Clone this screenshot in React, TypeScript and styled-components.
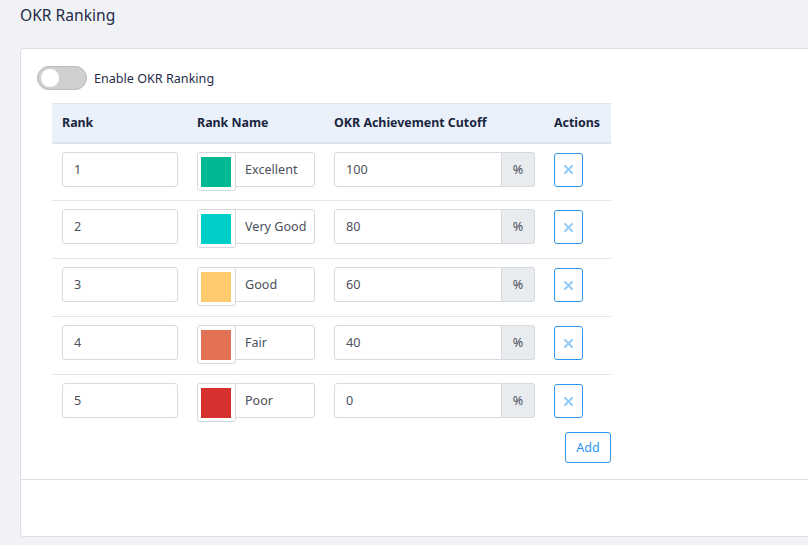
import React from "react";
import styled, { createGlobalStyle } from "styled-components";

const Global = createGlobalStyle`
  html, body { margin: 0; padding: 0; background: #f1f2f6; overflow: hidden; }
  body { font-family: "Noto Sans", "Open Sans", sans-serif; color: #1e2a4a; }
  * { box-sizing: border-box; }
`;

const Page = styled.div`
  width: 808px;
  height: 545px;
  padding: 0 0 0 20px;
  overflow: hidden;
`;

const Title = styled.h1`
  margin: 0;
  height: 48px;
  padding-top: 3px;
  font-size: 15.6px;
  font-weight: 400;
  color: #1f2b48;
  line-height: 24px;
`;

const Card = styled.div`
  width: 820px;
  height: 489px;
  background: #fff;
  border: 1px solid #dedfe3;
  border-radius: 3px;
  display: flex;
  flex-direction: column;
`;

const CardBody = styled.div`
  padding: 17px 0 0 16px;
  height: 431px;
  border-bottom: 1px solid #dedfe3;
`;

const ToggleRow = styled.label`
  display: flex;
  align-items: center;
  gap: 7px;
  font-size: 12.6px;
  color: #1f2b48;
  height: 24px;
`;

const Track = styled.span`
  width: 50px;
  height: 24px;
  border-radius: 12px;
  background: #cfcfcf;
  border: 1px solid #b9b9b9;
  display: flex;
  align-items: center;
  padding-left: 2px;
`;

const Knob = styled.span`
  width: 20px;
  height: 20px;
  border-radius: 50%;
  background: #fff;
  border: 1px solid #d4d4d4;
`;

const TableWrap = styled.div`
  margin: 13px 0 0 15px;
  width: 559px;
`;

const Table = styled.table`
  border-collapse: collapse;
  width: 100%;
`;

const Th = styled.th<{ $w: number }>`
  width: ${(p) => p.$w}px;
  text-align: left;
  font-size: 12.4px;
  font-weight: 700;
  color: #1a2540;
  background: #eaf1fb;
  border-top: 1px solid #dfe4ec;
  border-bottom: 2px solid #dfe4ec;
  height: 39px;
  padding: 0 0 0 10px;
`;

const Tr = styled.tr`
  border-bottom: 1px solid #e3e5e9;
  &:last-child { border-bottom: none; }
`;

const Td = styled.td`
  height: 58px;
  padding: 8px 0 0 10px;
  vertical-align: top;
`;

const TextInput = styled.input<{ $w: number }>`
  width: ${(p) => p.$w}px;
  height: 35px;
  border: 1px solid #d6d9de;
  border-radius: 3px;
  padding: 0 10px 0 11px;
  font-family: inherit;
  font-size: 12.6px;
  color: #4b4f5c;
  background: #fff;
  outline: none;
  display: block;
`;

const ColorGroup = styled.div`
  display: flex;
  align-items: flex-start;
`;

const Swatch = styled.div`
  width: 39px;
  height: 39px;
  border: 1px solid #d6d9de;
  border-radius: 3px;
  padding: 4px 4px 3px 3px;
  margin-right: -2px;
  background: #fff;
  position: relative;
  z-index: 1;
`;

const SwatchFill = styled.div<{ $c: string }>`
  width: 100%;
  height: 30px;
  background: ${(p) => p.$c};
`;

const NameInput = styled(TextInput)`
  border-radius: 0 3px 3px 0;
  padding-left: 10px;
  padding-right: 2px;
`;

const InputGroup = styled.div`
  display: flex;
  width: 201px;
  height: 35px;
`;

const GroupInput = styled(TextInput)`
  flex: 1;
  border-radius: 3px 0 0 3px;
`;

const Addon = styled.div`
  width: 33px;
  height: 35px;
  border: 1px solid #d6d9de;
  border-left: none;
  border-radius: 0 3px 3px 0;
  background: #e9ecef;
  display: flex;
  align-items: center;
  justify-content: center;
  font-size: 12.6px;
  color: #4b4f5c;
`;

const ActionTd = styled.td`
  padding: 8px 0 0 0;
  vertical-align: top;
`;

const DeleteBtn = styled.button`
  width: 29px;
  height: 34px;
  border: 1px solid #2d95ef;
  border-radius: 3px;
  background: #fff;
  display: flex;
  align-items: center;
  justify-content: center;
  padding: 0;
  margin-left: 10px;
  margin-top: 1px;
`;

const AddRow = styled.div`
  display: flex;
  justify-content: flex-end;
  margin-top: -1px;
`;

const AddBtn = styled.button`
  width: 46px;
  height: 31px;
  border: 1px solid #2d95ef;
  border-radius: 3px;
  background: #fff;
  color: #2d95ef;
  font-family: inherit;
  font-size: 12.6px;
  padding: 0;
`;

const ranks = [
  { n: "1", name: "Excellent", c: "#00b894", cut: "100" },
  { n: "2", name: "Very Good", c: "#00cec9", cut: "80" },
  { n: "3", name: "Good", c: "#fdcb6e", cut: "60" },
  { n: "4", name: "Fair", c: "#e17055", cut: "40" },
  { n: "5", name: "Poor", c: "#d63031", cut: "0" },
];

const XIcon = () => (
  <svg width="9" height="9" viewBox="0 0 9 9">
    <path d="M1 1L8 8M8 1L1 8" stroke="#92cbf8" strokeWidth="2" strokeLinecap="round" />
  </svg>
);

export default function App() {
  return (
    <Page>
      <Global />
      <Title>OKR Ranking</Title>
      <Card>
        <CardBody>
          <ToggleRow>
            <Track>
              <Knob />
            </Track>
            Enable OKR Ranking
          </ToggleRow>
          <TableWrap>
            <Table>
              <thead>
                <tr>
                  <Th $w={135}>Rank</Th>
                  <Th $w={137}>Rank Name</Th>
                  <Th $w={220}>OKR Achievement Cutoff</Th>
                  <Th $w={67}>Actions</Th>
                </tr>
              </thead>
              <tbody>
                {ranks.map((r) => (
                  <Tr key={r.n}>
                    <Td>
                      <TextInput $w={116} readOnly value={r.n} />
                    </Td>
                    <Td>
                      <ColorGroup>
                        <Swatch>
                          <SwatchFill $c={r.c} />
                        </Swatch>
                        <NameInput $w={81} readOnly value={r.name} />
                      </ColorGroup>
                    </Td>
                    <Td>
                      <InputGroup>
                        <GroupInput $w={168} readOnly value={r.cut} />
                        <Addon>%</Addon>
                      </InputGroup>
                    </Td>
                    <ActionTd>
                      <DeleteBtn>
                        <XIcon />
                      </DeleteBtn>
                    </ActionTd>
                  </Tr>
                ))}
              </tbody>
            </Table>
            <AddRow>
              <AddBtn>Add</AddBtn>
            </AddRow>
          </TableWrap>
        </CardBody>
      </Card>
    </Page>
  );
}
